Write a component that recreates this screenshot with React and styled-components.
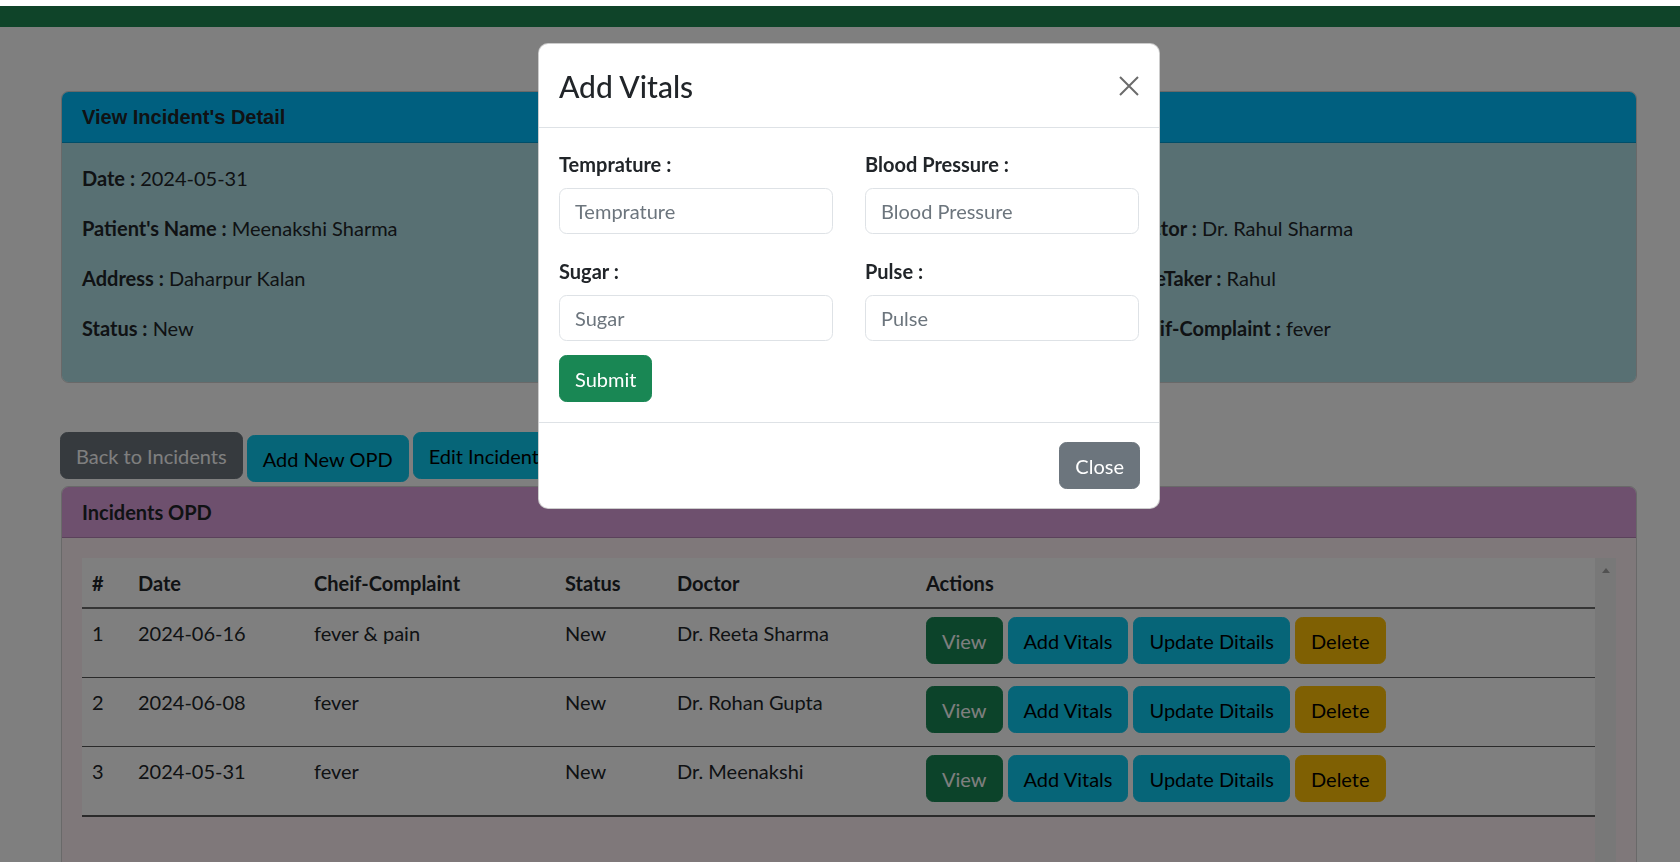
import React from "react";
import styled, { createGlobalStyle } from "styled-components";

const GlobalStyle = createGlobalStyle`
  * { box-sizing: border-box; }
  html, body {
    margin: 0;
    height: 100%;
    overflow: hidden;
    background: #fff;
  }
  body {
    font-family: Lato, "Open Sans", sans-serif;
    font-size: 20px;
    line-height: 1.5;
    color: #212529;
  }
`;

const variants = {
  secondary: { bg: "#6c757d", color: "#fff" },
  info: { bg: "#0dcaf0", color: "#000" },
  success: { bg: "#198754", color: "#fff" },
  warning: { bg: "#ffc107", color: "#000" },
};

const details = [
  [
    ["Date", "2024-05-31"],
    ["Patient's Name", "Meenakshi Sharma"],
    ["Address", "Daharpur Kalan"],
    ["Status", "New"],
  ],
  [],
  [
    null,
    ["Doctor", "Dr. Rahul Sharma"],
    ["CareTaker", "Rahul"],
    ["Cheif-Complaint", "fever"],
  ],
];

const opds = [
  { id: 1, date: "2024-06-16", complaint: "fever & pain", status: "New", doctor: "Dr. Reeta Sharma" },
  { id: 2, date: "2024-06-08", complaint: "fever", status: "New", doctor: "Dr. Rohan Gupta" },
  { id: 3, date: "2024-05-31", complaint: "fever", status: "New", doctor: "Dr. Meenakshi" },
];

export default function App() {
  return (
    <>
      <GlobalStyle />
      <Page>
        <TopBar />
        <Container>
          <Card>
            <DetailHeader>View Incident's Detail</DetailHeader>
            <DetailBody>
              {details.map((col, ci) => (
                <div key={ci}>
                  {col.map((item, i) =>
                    item ? (
                      <Line key={i}>
                        <b>{item[0]} :</b> {item[1]}
                      </Line>
                    ) : (
                      <Line key={i}>&nbsp;</Line>
                    )
                  )}
                </div>
              ))}
            </DetailBody>
          </Card>

          <ButtonRow>
            <Button variant="secondary">Back to Incidents</Button>
            <Button variant="info" $drop>
              Add New OPD
            </Button>
            <Button variant="info">Edit Incident</Button>
          </ButtonRow>

          <Card>
            <OpdHeader>Incidents OPD</OpdHeader>
            <OpdBody>
              <ScrollBox>
                <TableWrap>
                  <Table>
                    <colgroup>
                      <col style={{ width: 46 }} />
                      <col style={{ width: 176 }} />
                      <col style={{ width: 251 }} />
                      <col style={{ width: 112 }} />
                      <col style={{ width: 249 }} />
                      <col />
                    </colgroup>
                    <thead>
                      <tr>
                        <th>#</th>
                        <th>Date</th>
                        <th>Cheif-Complaint</th>
                        <th>Status</th>
                        <th>Doctor</th>
                        <th>Actions</th>
                      </tr>
                    </thead>
                    <tbody>
                      {opds.map((o) => (
                        <tr key={o.id}>
                          <td>{o.id}</td>
                          <td>{o.date}</td>
                          <td>{o.complaint}</td>
                          <td>{o.status}</td>
                          <td>{o.doctor}</td>
                          <td>
                            <Actions>
                              <Button variant="success">View</Button>
                              <Button variant="info">Add Vitals</Button>
                              <Button variant="info">Update Ditails</Button>
                              <Button variant="warning">Delete</Button>
                            </Actions>
                          </td>
                        </tr>
                      ))}
                    </tbody>
                  </Table>
                </TableWrap>
                <ScrollTrack>
                  <ArrowUp />
                </ScrollTrack>
              </ScrollBox>
            </OpdBody>
          </Card>
        </Container>
      </Page>

      <Backdrop />

      <Modal>
        <ModalHeader>
          <ModalTitle>Add Vitals</ModalTitle>
          <CloseX viewBox="0 0 20 20">
            <path d="M1 1 L19 19 M19 1 L1 19" />
          </CloseX>
        </ModalHeader>
        <ModalBody>
          <FormGrid>
            <Field>
              <Label>Temprature :</Label>
              <Input placeholder="Temprature" />
            </Field>
            <Field>
              <Label>Blood Pressure :</Label>
              <Input placeholder="Blood Pressure" />
            </Field>
            <Field>
              <Label>Sugar :</Label>
              <Input placeholder="Sugar" />
            </Field>
            <Field>
              <Label>Pulse :</Label>
              <Input placeholder="Pulse" />
            </Field>
          </FormGrid>
          <Button variant="success">Submit</Button>
        </ModalBody>
        <ModalFooter>
          <Button variant="secondary">Close</Button>
        </ModalFooter>
      </Modal>
    </>
  );
}

const Page = styled.div`
  padding-top: 6px;
`;

const TopBar = styled.div`
  height: 21px;
  background: #1e8852;
`;

const Container = styled.div`
  padding: 64px 43px 0 61px;
`;

const Card = styled.div`
  border: 1px solid rgba(0, 0, 0, 0.175);
  border-radius: 7.5px;
  overflow: hidden;
`;

const DetailHeader = styled.div`
  background: deepskyblue;
  padding: 10px 20px 10px;
  height: 51px;
  border-bottom: 1px solid rgba(0, 0, 0, 0.175);
  font-family: "Liberation Sans", Arial, sans-serif;
  font-weight: bold;
  font-size: 20px;
  line-height: 30px;
`;

const DetailBody = styled.div`
  background: powderblue;
  padding: 20px 20px 19px;
  display: grid;
  grid-template-columns: repeat(3, 1fr);
  column-gap: 30px;
`;

const Line = styled.p`
  margin: 0 0 20px;
  line-height: 30px;
`;

const ButtonRow = styled.div`
  display: flex;
  align-items: flex-start;
  gap: 4px;
  margin-top: 49px;
  margin-bottom: 4px;
  margin-left: -1px;
`;

const Button = styled.button`
  font-family: inherit;
  font-size: 20px;
  line-height: 30px;
  padding: 7.5px 15px;
  border: 1px solid ${(p) => variants[p.variant].bg};
  border-radius: 7.5px;
  background: ${(p) => variants[p.variant].bg};
  color: ${(p) => variants[p.variant].color};
  white-space: nowrap;
  cursor: pointer;
  margin-top: ${(p) => (p.$drop ? "3px" : "0")};
`;

const OpdHeader = styled.div`
  background: plum;
  padding: 10px 20px;
  height: 51px;
  border-bottom: 1px solid rgba(0, 0, 0, 0.175);
  font-weight: 700;
  line-height: 30px;
`;

const OpdBody = styled.div`
  background: lavenderblush;
  padding: 20px;
`;

const ScrollBox = styled.div`
  display: flex;
  height: 380px;
`;

const TableWrap = styled.div`
  flex: 1;
`;

const ScrollTrack = styled.div`
  width: 21px;
  background: #f1f1f1;
  display: flex;
  justify-content: center;
  padding-top: 10px;
`;

const ArrowUp = styled.div`
  width: 0;
  height: 0;
  border-left: 4.5px solid transparent;
  border-right: 4.5px solid transparent;
  border-bottom: 5px solid #a3a3a3;
`;

const Table = styled.table`
  width: 100%;
  table-layout: fixed;
  border-collapse: collapse;
  background: #fff;

  th,
  td {
    text-align: left;
    vertical-align: top;
    padding: 10px;
    line-height: 30px;
    white-space: nowrap;
  }
  th {
    font-weight: 700;
    padding-bottom: 9px;
    border-bottom: 2px solid #6a6a6a;
  }
  td {
    padding-top: 9px;
    padding-bottom: 13px;
    border-bottom: 1px solid #555;
  }
  tbody tr:last-child td {
    border-bottom-width: 2px;
  }
`;

const Actions = styled.div`
  display: flex;
  gap: 5px;
  margin-top: -1px;
`;

const Backdrop = styled.div`
  position: fixed;
  top: 6px;
  left: 0;
  right: 0;
  bottom: 0;
  background: rgba(0, 0, 0, 0.5);
  z-index: 10;
`;

const Modal = styled.div`
  position: fixed;
  top: 43px;
  left: 538px;
  width: 622px;
  background: #fff;
  border: 1px solid rgba(0, 0, 0, 0.2);
  border-radius: 10px;
  z-index: 20;
`;

const ModalHeader = styled.div`
  display: flex;
  align-items: center;
  justify-content: space-between;
  padding: 20px;
  height: 84px;
  border-bottom: 1px solid #dee2e6;
`;

const ModalTitle = styled.h4`
  margin: 0;
  font-size: 30px;
  font-weight: 500;
  line-height: 42px;
`;

const CloseX = styled.svg`
  width: 20px;
  height: 20px;
  stroke: #6b6b6b;
  stroke-width: 2;
  fill: none;
`;

const ModalBody = styled.div`
  padding: 21px 20px 20px;
`;

const FormGrid = styled.div`
  display: grid;
  grid-template-columns: 1fr 1fr;
  column-gap: 32px;
`;

const Field = styled.div`
  margin-bottom: 14px;
  &:nth-child(-n + 2) {
    margin-bottom: 22px;
  }
`;

const Label = styled.label`
  display: block;
  font-weight: 700;
  line-height: 30px;
  margin-bottom: 9px;
`;

const Input = styled.input`
  display: block;
  width: 100%;
  height: 46px;
  padding: 7.5px 15px;
  font-family: inherit;
  font-size: 20px;
  color: #212529;
  border: 1px solid #dee2e6;
  border-radius: 7.5px;
  outline: none;
  &::placeholder {
    color: #6c757d;
  }
`;

const ModalFooter = styled.div`
  display: flex;
  justify-content: flex-end;
  padding: 19px 19px 19px;
  border-top: 1px solid #dee2e6;
`;
